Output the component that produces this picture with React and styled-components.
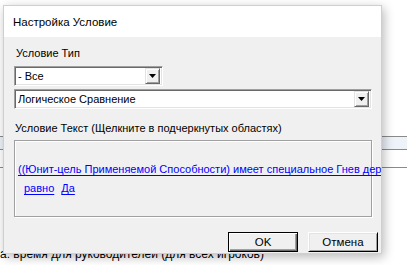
import React from 'react'
import styled, { createGlobalStyle } from 'styled-components'

const Global = createGlobalStyle`
  html, body { margin: 0; padding: 0; background: #fff; }
  body { font-family: "Liberation Sans", Arial, sans-serif; font-size: 11px; color: #000; }
`

function Select({ value, width }) {
  return (
    <SelectBox $width={width}>
      <SelectValue>{value}</SelectValue>
      <ArrowButton>
        <svg width="7" height="4" viewBox="0 0 7 4"><path d="M0 0h7L3.5 4z" fill="#000" /></svg>
      </ArrowButton>
    </SelectBox>
  )
}

export default function App() {
  return (
    <Screen>
      <Global />
      <Backdrop>
        <GridRow $band />
        <GridRow />
        <BehindText>а: время для руководителей (для всех игроков)</BehindText>
      </Backdrop>

      <Dialog>
        <TitleBar>Настройка Условие</TitleBar>
        <Body>
          <Label>Условие Тип</Label>
          <Select value="- Все" width="149px" />
          <Select value="Логическое Сравнение" width="358px" />
          <Label $gap>Условие Текст (Щелкните в подчеркнутых областях)</Label>
          <GroupBox>
            <LinkLine>
              <Link>((Юнит-цель Применяемой Способности) имеет специальное Гнев дерева)</Link>
            </LinkLine>
            <LinkLine $indent>
              <Link>равно</Link>
              <Link>Да</Link>
            </LinkLine>
          </GroupBox>
          <Buttons>
            <Button $default>OK</Button>
            <Button>Отмена</Button>
          </Buttons>
        </Body>
      </Dialog>
    </Screen>
  )
}

const Screen = styled.div`
  position: relative;
  width: 407px;
  height: 265px;
  overflow: hidden;
  background: #fff;
`

const Backdrop = styled.div`
  padding-top: 136px;
  display: flex;
  flex-direction: column;
`

const GridRow = styled.div`
  height: ${p => (p.$band ? '12px' : '17px')};
  border-top: 1px solid #8a8a8a;
  background: ${p => (p.$band ? '#eef2f9' : '#fff')};
  &:nth-child(2) { border-bottom: 1px solid #8a8a8a; }
`

const BehindText = styled.div`
  margin-top: 79px;
  font-size: 12px;
  line-height: 14px;
  white-space: nowrap;
  color: #000;
`

const Dialog = styled.div`
  position: absolute;
  z-index: 1;
  left: 3px;
  top: 5px;
  width: 377px;
  height: 247px;
  border: 1px solid #cfcfcf;
  background: #f0f0f0;
  box-shadow: 2px 3px 10px rgba(0, 0, 0, 0.28);
  overflow: hidden;
  display: flex;
  flex-direction: column;
`

const TitleBar = styled.div`
  height: 31px;
  background: #fff;
  padding-left: 9px;
  padding-top: 1px;
  box-sizing: border-box;
  display: flex;
  align-items: center;
  font-size: 11.5px;
`

const Body = styled.div`
  flex: 1;
  padding: 9px 0 0 10px;
  display: flex;
  flex-direction: column;
`

const Label = styled.div`
  line-height: 15px;
  margin: ${p => (p.$gap ? '9px 0 4px' : '0 0 5px 1px')};
  padding-left: 1px;
`

const SelectBox = styled.div`
  width: ${p => p.$width};
  height: 20px;
  box-sizing: border-box;
  margin-bottom: 3px;
  background: #fff;
  border-top: 1px solid #a0a0a0;
  border-left: 1px solid #a0a0a0;
  border-right: 1px solid #fff;
  border-bottom: 1px solid #fff;
  box-shadow: inset 1px 1px 0 #696969, inset -1px -1px 0 #e3e3e3;
  display: flex;
  align-items: center;
  padding: 2px 2px 2px 3px;
`

const SelectValue = styled.span`
  flex: 1;
  white-space: nowrap;
  overflow: hidden;
`

const ArrowButton = styled.span`
  width: 15px;
  height: 16px;
  box-sizing: border-box;
  background: #f0f0f0;
  border-top: 1px solid #e3e3e3;
  border-left: 1px solid #e3e3e3;
  border-right: 1px solid #696969;
  border-bottom: 1px solid #696969;
  box-shadow: inset 1px 1px 0 #fff, inset -1px -1px 0 #a0a0a0;
  display: flex;
  align-items: center;
  justify-content: center;
`

const GroupBox = styled.div`
  width: 358px;
  height: 77px;
  box-sizing: border-box;
  border: 1px solid #a0a0a0;
  box-shadow: 1px 1px 0 #fff, inset 1px 1px 0 #fff;
  padding-top: 21px;
`

const LinkLine = styled.div`
  display: flex;
  gap: 7px;
  white-space: nowrap;
  padding-left: ${p => (p.$indent ? '9px' : '3px')};
  font-size: 11px;
  line-height: 15px;
  margin-bottom: 4px;
`

const Link = styled.span`
  color: #0000ff;
  text-decoration: underline;
  text-underline-offset: 2px;
`

const Buttons = styled.div`
  margin-top: auto;
  margin-bottom: 1px;
  padding-right: 3px;
  display: flex;
  justify-content: flex-end;
  gap: 10px;
`

const Button = styled.div`
  width: 70px;
  height: 20px;
  box-sizing: border-box;
  display: flex;
  align-items: center;
  justify-content: center;
  font-size: 11.5px;
  background: #f0f0f0;
  border: 1px solid ${p => (p.$default ? '#000' : '#fff')};
  border-right-color: #000;
  border-bottom-color: #000;
  box-shadow: ${p =>
    p.$default
      ? 'inset 1px 1px 0 #fff, inset -1px -1px 0 #696969, inset -2px -2px 0 #a0a0a0'
      : 'inset 1px 1px 0 #e3e3e3, inset -1px -1px 0 #a0a0a0'};
`
